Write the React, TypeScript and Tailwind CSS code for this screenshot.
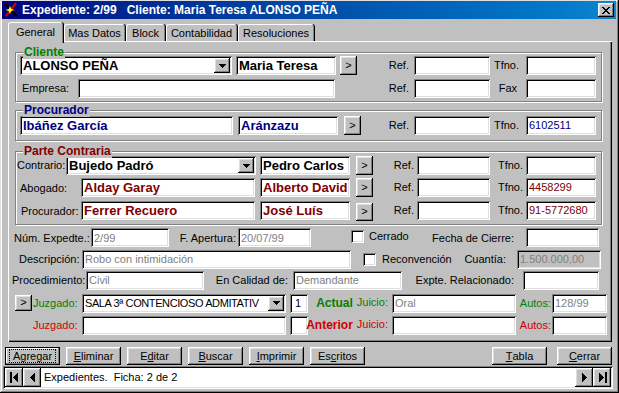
import type { ReactNode } from "react";

const sunken = "shadow-[inset_1px_1px_#808080,inset_-1px_-1px_#fff,inset_2px_2px_#000,inset_-2px_-2px_#dfdfdf]";
const raised = "shadow-[inset_-1px_-1px_#000,inset_1px_1px_#fff,inset_-2px_-2px_#808080,inset_2px_2px_#dfdfdf]";

type BoxProps = { w: string; children?: ReactNode; className?: string };

function Field({ w, children, className = "", gray = false }: BoxProps & { gray?: boolean }) {
  return (
    <div
      className={`flex h-[19px] shrink-0 items-center overflow-hidden whitespace-nowrap pl-[3px] ${gray ? "bg-[#c0c0c0]" : "bg-white"} ${sunken} ${w} ${className}`}
    >
      {children}
    </div>
  );
}

function Label({ w, children, className = "" }: BoxProps) {
  return <span className={`shrink-0 whitespace-nowrap ${w} ${className}`}>{children}</span>;
}

function DownArrow() {
  return (
    <svg width="7" height="4" viewBox="0 0 7 4" shapeRendering="crispEdges">
      <path d="M0 0h7v1h-1v1h-1v1h-1v1h-1v-1h-1v-1h-1v-1h-1z" fill="#000" />
    </svg>
  );
}

function Combo({ w, children, className = "" }: BoxProps) {
  return (
    <div className={`flex h-[19px] shrink-0 items-center bg-white pl-[3px] pr-[2px] ${sunken} ${w}`}>
      <div className={`min-w-0 flex-1 overflow-hidden whitespace-nowrap ${className}`}>{children}</div>
      <div className={`flex h-[15px] w-[16px] shrink-0 items-center justify-center bg-[#c0c0c0] ${raised}`}>
        <DownArrow />
      </div>
    </div>
  );
}

function More({ className = "" }: { className?: string }) {
  return (
    <div
      className={`flex w-[17px] shrink-0 items-center justify-center bg-[#c0c0c0] pb-[1px] text-[11px] leading-none ${raised} ${className}`}
    >
      &gt;
    </div>
  );
}

function Check({ className = "" }: { className?: string }) {
  return <span className={`h-[13px] w-[13px] shrink-0 bg-white ${sunken} ${className}`} />;
}

function Group({ title, color, className, children }: { title: string; color: string; className: string; children: ReactNode }) {
  return (
    <div className={`relative flex flex-col border border-[#808080] shadow-[1px_1px_0_#fff,inset_1px_1px_0_#fff] ${className}`}>
      <span className={`absolute left-[7px] top-[-8px] bg-[#c0c0c0] px-[1px] text-[12px] font-bold leading-[14px] ${color}`}>
        {title}
      </span>
      {children}
    </div>
  );
}

function Tab({ label, w, active = false, className = "" }: { label: string; w: string; active?: boolean; className?: string }) {
  return (
    <div
      className={`flex shrink-0 items-center justify-center rounded-t-[3px] border-l border-r border-t border-l-white border-r-[#808080] border-t-white bg-[#c0c0c0] shadow-[1px_0_0_#000] ${
        active ? "relative z-10 mb-[-2px] h-[21px] pb-[2px]" : "h-[17px]"
      } ${w} ${className}`}
    >
      {label}
    </div>
  );
}

function Button({ children, w, focused = false }: { children: ReactNode; w: string; focused?: boolean }) {
  return (
    <div
      className={`flex h-[18px] shrink-0 items-center justify-center bg-[#c0c0c0] ${w} ${
        focused
          ? "border border-black shadow-[inset_-1px_-1px_#808080,inset_1px_1px_#fff]"
          : raised
      }`}
    >
      {focused ? <span className="border border-dotted border-black px-[3px] leading-[12px]">{children}</span> : children}
    </div>
  );
}

function NavBtn({ dir, end = false }: { dir: "left" | "right"; end?: boolean }) {
  const left = dir === "left";
  return (
    <div className={`flex h-[19px] w-[18px] shrink-0 items-center justify-center bg-[#c0c0c0] ${raised}`}>
      <svg width="9" height="11" viewBox="0 0 9 11" shapeRendering="crispEdges">
        {left ? (
          <>
            {end ? <rect x="0" y="0" width="2" height="11" fill="#000" /> : null}
            <path d={end ? "M8 0v11L3 5.5z" : "M7 0v11L2 5.5z"} fill="#000" />
          </>
        ) : (
          <>
            <path d={end ? "M1 0v11l5-5.5z" : "M2 0v11l5-5.5z"} fill="#000" />
            {end ? <rect x="7" y="0" width="2" height="11" fill="#000" /> : null}
          </>
        )}
      </svg>
    </div>
  );
}

function U({ children }: { children: ReactNode }) {
  return <span className="underline underline-offset-[1px]">{children}</span>;
}

export default function App() {
  const bold = "text-[13px] font-bold";
  const gray = "text-[#808080]";

  return (
    <div className="h-[393px] w-[619px] overflow-hidden bg-[#c0c0c0] font-['Liberation_Sans',Arial,sans-serif] text-[11px] text-black shadow-[inset_-1px_-1px_#000,inset_1px_1px_#dfdfdf,inset_-2px_-2px_#808080,inset_2px_2px_#fff]">
      <div className="flex min-h-px flex-col pt-[1px]">
        {/* title bar */}
        <div className="ml-[2px] flex h-[18px] w-[614px] items-center bg-linear-to-r from-[#000080] to-[#1084d0]">
          <svg width="16" height="16" viewBox="0 0 16 16" className="ml-[1px] shrink-0">
            <path d="M2 2 L14 14" stroke="#000" strokeWidth="2.2" />
            <path d="M13 1 L3 14" stroke="#d00000" strokeWidth="2.2" />
            <path d="M7 4 L8.3 7 L11.5 8 L8.3 9 L7 12 L5.8 9 L2.5 8 L5.8 7 Z" fill="#ffff00" />
          </svg>
          <span className="ml-[3px] whitespace-pre text-[12px] font-bold text-white">
            {"Expediente: 2/99   Cliente: Maria Teresa ALONSO PEÑA"}
          </span>
          <div className={`ml-auto mr-[2px] flex h-[14px] w-[16px] items-center justify-center bg-[#c0c0c0] ${raised}`}>
            <svg width="8" height="7" viewBox="0 0 8 7" shapeRendering="crispEdges">
              <path d="M0 0h2v1h1v1h2v-1h1v-1h2v1h-1v1h-1v1h-1v1h1v1h1v1h1v1h-2v-1h-1v-1h-2v1h-1v1h-2v-1h1v-1h1v-1h1v-1h-1v-1h-1v-1h-1z" fill="#000" />
            </svg>
          </div>
        </div>

        {/* tabs */}
        <div className="ml-[8px] mt-[3px] flex h-[19px] items-end">
          <Tab label="General" w="w-[55px]" active />
          <Tab label="Mas Datos" w="w-[61px]" className="ml-[1px]" />
          <Tab label="Block" w="w-[39px]" className="ml-[1px]" />
          <Tab label="Contabilidad" w="w-[71px]" className="ml-[1px]" />
          <Tab label="Resoluciones" w="w-[76px]" className="ml-[1px]" />
        </div>

        {/* panel */}
        <div className="ml-[8px] flex h-[301px] w-[604px] flex-col p-[2px] shadow-[inset_1px_1px_#fff,inset_-1px_-1px_#000,inset_-2px_-2px_#808080]">
          <Group title="Cliente" color="text-[#008000]" className="ml-[5px] mt-[9px] h-[50px] w-[587px]">
            <div className="ml-[4px] mt-[3px] flex items-center">
              <Combo w="w-[212px]" className={bold}>ALONSO PEÑA</Combo>
              <Field w="w-[100px]" className={`ml-[4px] ${bold}`}>Maria Teresa</Field>
              <More className="ml-[4px] h-[19px]" />
              <Label w="w-[52px]" className="text-right">Ref.</Label>
              <Field w="w-[76px]" className="ml-[5px]" />
              <Label w="w-[29px]" className="text-right">Tfno.</Label>
              <Field w="w-[70px]" className="ml-[7px]" />
            </div>
            <div className="ml-[4px] mt-[4px] flex items-center">
              <Label w="w-[58px]" className="pl-[2px]">Empresa:</Label>
              <Field w="w-[257px]" />
              <Label w="w-[74px]" className="text-right">Ref.</Label>
              <Field w="w-[76px]" className="ml-[5px]" />
              <Label w="w-[27px]" className="text-right">Fax</Label>
              <Field w="w-[70px]" className="ml-[9px]" />
            </div>
          </Group>

          <Group title="Procurador" color="text-[#000080]" className="ml-[5px] mt-[8px] h-[31px] w-[587px]">
            <div className="ml-[4px] mt-[5px] flex items-center">
              <Field w="w-[213px]" className={`${bold} text-[#000080]`}>Ibáñez García</Field>
              <Field w="w-[100px]" className={`ml-[5px] ${bold} text-[#000080]`}>Aránzazu</Field>
              <More className="ml-[6px] h-[19px]" />
              <Label w="w-[48px]" className="text-right">Ref.</Label>
              <Field w="w-[76px]" className="ml-[5px]" />
              <Label w="w-[29px]" className="text-right">Tfno.</Label>
              <Field w="w-[70px]" className="ml-[7px] text-[#000080]">6102511</Field>
            </div>
          </Group>

          <Group title="Parte Contraria" color="text-[#800000]" className="ml-[5px] mt-[10px] h-[74px] w-[587px]">
            <div className="ml-[1px] mt-[4px] flex items-center">
              <Label w="w-[49px]">Contrario:</Label>
              <Combo w="w-[190px]" className={bold}>Bujedo Padró</Combo>
              <Field w="w-[90px]" className={`ml-[4px] ${bold}`}>Pedro Carlos</Field>
              <More className="ml-[6px] h-[19px]" />
              <Label w="w-[41px]" className="text-right">Ref.</Label>
              <Field w="w-[73px]" className="ml-[3px]" />
              <Label w="w-[33px]" className="text-right">Tfno.</Label>
              <Field w="w-[70px]" className="ml-[3px]" />
            </div>
            <div className="ml-[4px] mt-[3px] flex items-center">
              <Label w="w-[61px]" className="pt-[2px]">Abogado:</Label>
              <Field w="w-[174px]" className={`${bold} text-[#800000]`}>Alday Garay</Field>
              <Field w="w-[90px]" className={`ml-[5px] ${bold} text-[#800000]`}>Alberto David</Field>
              <More className="ml-[6px] h-[19px]" />
              <Label w="w-[41px]" className="text-right">Ref.</Label>
              <Field w="w-[73px]" className="ml-[3px]" />
              <Label w="w-[33px]" className="text-right">Tfno.</Label>
              <Field w="w-[70px]" className="ml-[3px] text-[#800000]">4458299</Field>
            </div>
            <div className="ml-[5px] mt-[3px] flex items-center">
              <Label w="w-[60px]" className="pt-[2px]">Procurador:</Label>
              <Field w="w-[174px]" className={`${bold} text-[#800000]`}>Ferrer Recuero</Field>
              <Field w="w-[90px]" className={`ml-[5px] ${bold} text-[#800000]`}>José Luís</Field>
              <More className="ml-[6px] mt-[3px] h-[18px]" />
              <Label w="w-[41px]" className="text-right">Ref.</Label>
              <Field w="w-[73px]" className="ml-[3px]" />
              <Label w="w-[33px]" className="text-right">Tfno.</Label>
              <Field w="w-[70px]" className="ml-[3px] text-[#800000]">91-5772680</Field>
            </div>
          </Group>

          <div className="ml-[4px] mt-[3px] flex items-center">
            <Label w="w-[77px]">Núm. Expedte.:</Label>
            <Field w="w-[78px]" className={gray}>2/99</Field>
            <Label w="w-[67px]" className="text-right">F. Apertura:</Label>
            <Field w="w-[73px]" className={`ml-[2px] ${gray}`}>20/07/99</Field>
            <Check className="mb-[3px] ml-[40px]" />
            <Label w="w-[50px]" className="mb-[3px] ml-[5px]">Cerrado</Label>
            <Label w="w-[95px]" className="text-right">Fecha de Cierre:</Label>
            <Field w="w-[73px]" className="ml-[12px]" />
          </div>

          <div className="ml-[9px] mt-[2px] flex items-center">
            <Label w="w-[63px]">Descripción:</Label>
            <Field w="w-[269px]" className={gray}>Robo con intimidación</Field>
            <Check className="ml-[12px]" />
            <Label w="w-[79px]" className="ml-[6px]">Reconvención</Label>
            <Label w="w-[45px]" className="text-right">Cuantía:</Label>
            <Field w="w-[84px]" gray className={`ml-[11px] ${gray}`}>1.500.000,00</Field>
          </div>

          <div className="ml-[2px] mt-[2px] flex items-center">
            <Label w="w-[74px]">Procedimiento:</Label>
            <Field w="w-[118px]" className={gray}>Civil</Field>
            <Label w="w-[84px]" className="text-right">En Calidad de:</Label>
            <Field w="w-[109px]" className={`ml-[5px] ${gray}`}>Demandante</Field>
            <Label w="w-[112px]" className="text-right">Expte. Relacionado:</Label>
            <Field w="w-[76px]" className="ml-[9px]" />
          </div>

          <div className="ml-[5px] mt-[4px] flex items-center">
            <More className="h-[16px]" />
            <Label w="w-[49px]" className="ml-[1px] text-[#008000]">Juzgado:</Label>
            <Combo w="w-[204px]" className="tracking-[-0.4px]">SALA 3ª CONTENCIOSO ADMITATIV</Combo>
            <Field w="w-[18px]" className="ml-[4px] pl-[5px]">1</Field>
            <div className="flex w-[84px] shrink-0 justify-end gap-[4px] pr-[4px] text-[#008000]">
              <span className="text-[12px] font-bold">Actual</span>
              <span>Juicio:</span>
            </div>
            <Field w="w-[124px]" className={gray}>Oral</Field>
            <Label w="w-[36px]" className="pr-[1px] text-right text-[#008000]">Autos:</Label>
            <Field w="w-[55px]" className={gray}>128/99</Field>
          </div>

          <div className="ml-[23px] mt-[3px] flex items-center">
            <Label w="w-[49px]" className="text-[#cc0000]">Juzgado:</Label>
            <Field w="w-[204px]" />
            <Field w="w-[18px]" className="ml-[4px]" />
            <div className="flex w-[84px] shrink-0 justify-end gap-[4px] pr-[4px] text-[#cc0000]">
              <span className="text-[12px] font-bold">Anterior</span>
              <span>Juicio:</span>
            </div>
            <Field w="w-[124px]" />
            <Label w="w-[36px]" className="pr-[1px] text-right text-[#cc0000]">Autos:</Label>
            <Field w="w-[55px]" />
          </div>
        </div>

        {/* buttons */}
        <div className="mt-[5px] flex items-center justify-between pl-[5px] pr-[7px]">
          <div className="flex gap-[6px]">
            <Button w="w-[55px]" focused>Agregar</Button>
            <Button w="w-[55px]"><U>E</U>liminar</Button>
            <Button w="w-[55px]">E<U>d</U>itar</Button>
            <Button w="w-[55px]"><U>B</U>uscar</Button>
            <Button w="w-[55px]"><U>I</U>mprimir</Button>
            <Button w="w-[55px]">Es<U>c</U>ritos</Button>
          </div>
          <div className="flex gap-[10px]">
            <Button w="w-[55px]"><U>T</U>abla</Button>
            <Button w="w-[55px]"><U>C</U>errar</Button>
          </div>
        </div>

        {/* status bar */}
        <div className="ml-[3px] mt-[1px] flex h-[23px] w-[610px] items-stretch p-[2px] shadow-[inset_1px_1px_#808080,inset_-1px_-1px_#fff,inset_2px_2px_#000,inset_-2px_-2px_#dfdfdf]">
          <NavBtn dir="left" end />
          <NavBtn dir="left" />
          <div className="flex flex-1 items-center whitespace-pre bg-white pl-[3px] text-[11px]">
            {"Expedientes.  Ficha: 2 de 2"}
          </div>
          <NavBtn dir="right" />
          <NavBtn dir="right" end />
        </div>
      </div>
    </div>
  );
}
